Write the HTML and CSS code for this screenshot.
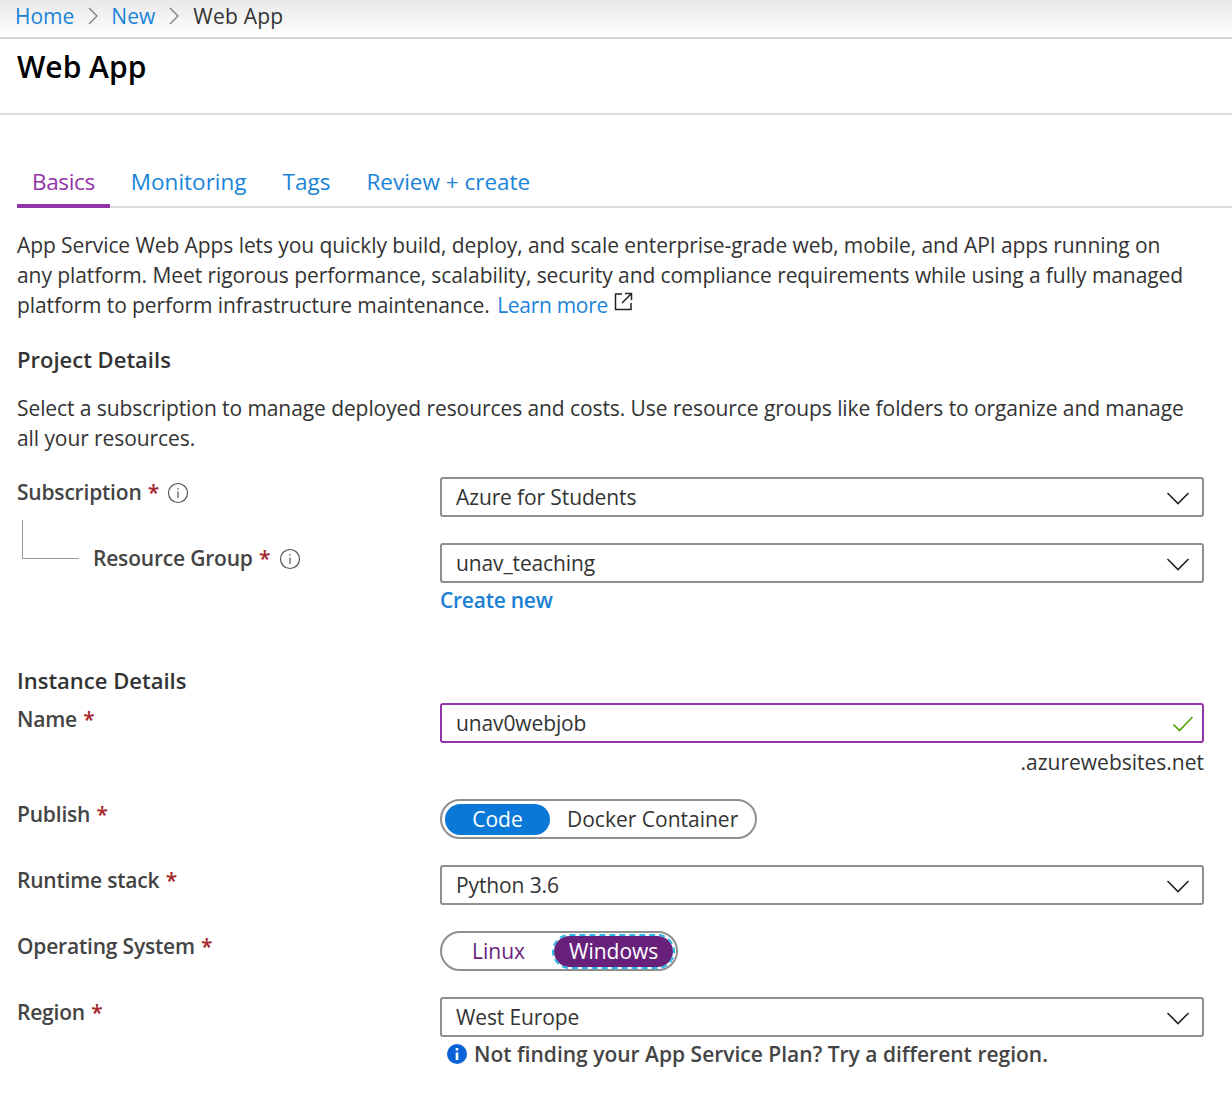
FILE: index.html
```html
<!DOCTYPE html>
<html lang="en">
<head>
  <meta charset="UTF-8" />
  <title>Web App</title>
  <link rel="stylesheet" href="styles.css">
</head>
<body>

<nav class="crumbs">
  <a href="#">Home</a>
  <svg class="sep" width="12" height="20" viewBox="0 0 12 20"><path d="M2 2l8 8-8 8" fill="none" stroke="#777" stroke-width="1.2"/></svg>
  <a href="#">New</a>
  <svg class="sep" width="12" height="20" viewBox="0 0 12 20"><path d="M2 2l8 8-8 8" fill="none" stroke="#777" stroke-width="1.2"/></svg>
  <span>Web App</span>
</nav>

<header class="title-bar">
  <h1>Web App</h1>
</header>

<main class="content">
  <div class="tabs">
    <a class="tab active" href="#">Basics</a>
    <a class="tab" href="#">Monitoring</a>
    <a class="tab" href="#">Tags</a>
    <a class="tab" href="#">Review + create</a>
  </div>

  <p class="intro">App Service Web Apps lets you quickly build, deploy, and scale enterprise-grade web, mobile, and API apps running on any platform. Meet rigorous performance, scalability, security and compliance requirements while using a fully managed platform to perform infrastructure maintenance.
    <a class="learn" href="#">Learn more</a>
    <svg class="ext" width="19" height="19" viewBox="0 0 19 19"><path d="M8 2H1.500V17.500H17V11M11 1.500H17.500V8M17.500 1.500L8 11" fill="none" stroke="#222" stroke-width="1.500"/></svg>
  </p>

  <h2 class="section first">Project Details</h2>
  <p class="section-text">Select a subscription to manage deployed resources and costs. Use resource groups like folders to organize and manage all your resources.</p>

  <div class="form">
    <label class="label">Subscription <i class="req">*</i>
      <svg class="info" width="22" height="22" viewBox="0 0 22 22"><circle cx="11" cy="11" r="9.500" fill="none" stroke="#555" stroke-width="1.200"/><path d="M11 9.500v6.500M11 6v1.600" stroke="#555" stroke-width="1.200"/></svg>
    </label>
    <div class="select">Azure for Students
      <svg class="chev" width="24" height="14" viewBox="0 0 24 14"><path d="M1.500 2l10.500 10.500L22.500 2" fill="none" stroke="#222" stroke-width="1.600"/></svg>
    </div>

    <label class="label nested"><span class="elbow"></span>Resource Group <i class="req">*</i>
      <svg class="info" width="22" height="22" viewBox="0 0 22 22"><circle cx="11" cy="11" r="9.500" fill="none" stroke="#555" stroke-width="1.200"/><path d="M11 9.500v6.500M11 6v1.600" stroke="#555" stroke-width="1.200"/></svg>
    </label>
    <div>
      <div class="select">unav_teaching
        <svg class="chev" width="24" height="14" viewBox="0 0 24 14"><path d="M1.500 2l10.500 10.500L22.500 2" fill="none" stroke="#222" stroke-width="1.600"/></svg>
      </div>
      <a class="create" href="#">Create new</a>
    </div>
  </div>

  <h2 class="section second">Instance Details</h2>

  <div class="form">
    <label class="label name">Name <i class="req">*</i></label>
    <div>
      <div class="select valid">unav0webjob
        <svg class="check" width="22" height="18" viewBox="0 0 22 18"><path d="M1.500 9.500l6 6L20.500 2" fill="none" stroke="#57a300" stroke-width="1.700"/></svg>
      </div>
      <div class="suffix">.azurewebsites.net</div>
    </div>

    <label class="label">Publish <i class="req">*</i></label>
    <div class="toggle publish">
      <span class="opt on">Code</span>
      <span class="opt">Docker Container</span>
    </div>

    <label class="label">Runtime stack <i class="req">*</i></label>
    <div class="select">Python 3.6
      <svg class="chev" width="24" height="14" viewBox="0 0 24 14"><path d="M1.500 2l10.500 10.500L22.500 2" fill="none" stroke="#222" stroke-width="1.600"/></svg>
    </div>

    <label class="label">Operating System <i class="req">*</i></label>
    <div class="toggle os">
      <span class="opt plain">Linux</span>
      <span class="opt picked">Windows</span>
    </div>

    <label class="label">Region <i class="req">*</i></label>
    <div>
      <div class="select">West Europe
        <svg class="chev" width="24" height="14" viewBox="0 0 24 14"><path d="M1.500 2l10.500 10.500L22.500 2" fill="none" stroke="#222" stroke-width="1.600"/></svg>
      </div>
      <div class="note">
        <svg width="22" height="22" viewBox="0 0 22 22"><circle cx="11" cy="11" r="10" fill="#0b62d6"/><path d="M11 9.500v7.500M11 5v2.600" stroke="#fff" stroke-width="2.600"/></svg>
        Not finding your App Service Plan? Try a different region.
      </div>
    </div>
  </div>
</main>

</body>
</html>
```

FILE: styles.css
```css
html, body { margin: 0; padding: 0; }
body { font-family: 'Open Sans', 'Noto Sans', sans-serif; font-size: 21px; color: #333; background: #fff; height: 1100px; overflow: hidden; }
a { color: #1a84d8; text-decoration: none; }

.crumbs { height: 31px; padding: 0 0 6px 15px; display: flex; align-items: center; gap: 12.5px; border-bottom: 2px solid #d6d6d6; background: linear-gradient(#e9e9e9, #fff); color: #333; }
.crumbs span { margin-left: 1px; letter-spacing: 0.25px; }
.title-bar { height: 74px; border-bottom: 2px solid #dcdcdc; padding-left: 17px; }
h1 { margin: 0; font-size: 30px; font-weight: 600; line-height: 56px; color: #000; }

.content { padding: 0 0 0 17px; }
.tabs { display: flex; margin-top: 46px; border-bottom: 2px solid #ddd; height: 47px; box-sizing: border-box; font-size: 22.5px; }
.tab { padding: 0 15px; margin-right: 6px; line-height: 42px; height: 43px; }
.tab.active { color: #9334a8; border-bottom: 4px solid #9334a8; letter-spacing: -0.35px; }

.intro { margin: 22px 42px 0 0; line-height: 30px; color: #333; letter-spacing: -0.08px; }
.learn { margin-left: 2px; letter-spacing: -0.3px; }
.ext { vertical-align: 2px; margin-left: 1px; }

.section { margin: 0; font-size: 22px; font-weight: 600; line-height: 30px; color: #333; }
.section.first { margin-top: 24px; }
.section.second { margin-top: 48px; }
.section-text { margin: 19px 28px 0 0; line-height: 30px; letter-spacing: -0.08px; }

.form { display: grid; grid-template-columns: 423px 764px; row-gap: 26px; }
.section-text + .form { margin-top: 24px; }
.section.second + .form { margin-top: 8px; }

.label { font-weight: 600; color: #444; line-height: 30px; position: relative; white-space: nowrap; letter-spacing: -0.2px; }
.label.name { padding-top: 1px; }
.req { color: #a4262c; font-style: normal; font-weight: 600; margin-left: 1px; }
.info { vertical-align: -4px; margin-left: 3px; }
.nested { padding-left: 76px; }
.elbow { position: absolute; left: 5px; top: -23px; width: 56px; height: 38px; border-left: 1px solid #999; border-bottom: 1px solid #999; }

.select { height: 40px; box-sizing: border-box; border: 2px solid #8f8f8f; border-radius: 3px; padding-left: 14px; line-height: 36px; position: relative; letter-spacing: -0.12px; }
.select.valid { border-color: #9334a8; }
.chev { position: absolute; right: 12px; top: 12px; }
.check { position: absolute; right: 8px; top: 10px; }
.create { display: block; font-weight: 600; line-height: 34px; color: #1a7fd1; letter-spacing: -0.25px; }
.suffix { text-align: right; line-height: 38px; margin-bottom: -8px; }

.toggle { display: inline-flex; justify-self: start; align-items: center; height: 40px; box-sizing: border-box; border: 2px solid #8f8f8f; border-radius: 20px; padding: 0 3px; }
.opt { height: 31px; line-height: 31px; border-radius: 16px; }
.on { background: #0a78d7; color: #fff; width: 105px; text-align: center; }
.publish .opt:last-child { padding: 0 14px 0 17px; }
.plain { color: #68217a; padding: 0 29px 0 27px; }
.picked { background: #68217a; color: #fff; padding: 0 15px; outline: 2px dashed #29b6e8; }

.note { display: flex; align-items: center; gap: 6px; margin: 2px 0 0 6px; font-weight: 600; color: #444; line-height: 30px; }
```
